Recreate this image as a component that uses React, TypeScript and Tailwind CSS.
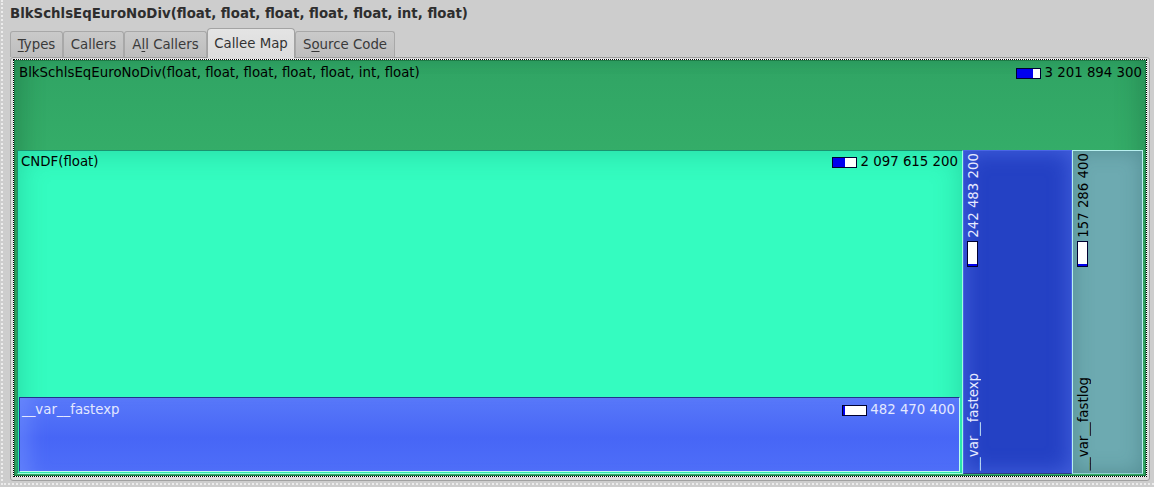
import React from "react";

const FONT = { fontFamily: '"DejaVu Sans", "Liberation Sans", sans-serif' };

function Bar({ pct, vertical = false }: { pct: number; vertical?: boolean }) {
  if (vertical) {
    return (
      <div className="w-[11px] h-[26px] border border-[#000030] bg-white flex flex-col justify-end shrink-0">
        <div className="bg-[#0000ee] w-full" style={{ height: `${pct}%` }} />
      </div>
    );
  }
  return (
    <div className="w-[25px] h-[11px] border border-[#000030] bg-white flex shrink-0">
      <div className="bg-[#0000ee] h-full" style={{ width: `${pct}%` }} />
    </div>
  );
}

function Tab({
  label,
  width,
  active = false,
}: {
  label: React.ReactNode;
  width: string;
  active?: boolean;
}) {
  if (active) {
    return (
      <div
        className={`${width} h-[30px] -mb-px relative z-10 flex items-center justify-center rounded-t-[4px] border border-b-0 border-[#a3a3a3] bg-[linear-gradient(180deg,#e4e4e4,#dcdcdc)] text-[#333] text-[13.33px]`}
      >
        {label}
      </div>
    );
  }
  return (
    <div
      className={`${width} h-[26px] flex items-center justify-center rounded-t-[3px] border border-b-0 border-[#a8a8a8] bg-[linear-gradient(180deg,#cacaca,#bdbdbd)] text-[#3a3a3a] text-[13.33px]`}
    >
      {label}
    </div>
  );
}

export default function App() {
  return (
    <div
      className="w-[1154px] h-[487px] bg-[#cdcdcd] overflow-hidden pl-px"
      style={FONT}
    >
      <div className="h-[485px] border-l-2 border-b-2 border-dotted border-[#ececec] flex flex-col">
        {/* Title */}
        <div className="h-[28px] pl-[7px] flex items-center text-[13.33px] font-bold text-[#2e2e2e] leading-none">
          BlkSchlsEqEuroNoDiv(float, float, float, float, float, int, float)
        </div>

        {/* Tabs */}
        <div className="h-[29px] pl-[7px] flex items-end">
          <Tab
            width="w-[53px]"
            label={
              <span>
                <span className="underline underline-offset-2">T</span>ypes
              </span>
            }
          />
          <Tab width="w-[61px]" label="Callers" />
          <Tab
            width="w-[83px]"
            label={
              <span>
                A<span className="underline underline-offset-2">l</span>l Callers
              </span>
            }
          />
          <Tab width="w-[88px]" label="Callee Map" active />
          <Tab
            width="w-[100px]"
            label={
              <span>
                S<span className="underline underline-offset-2">o</span>urce Code
              </span>
            }
          />
        </div>

        {/* Panel */}
        <div className="ml-[7px] w-[1140px] h-[424px] border border-[#a0a0a0] rounded-[3px] bg-[#dedede] pt-px pb-[3px] px-[2px] flex flex-col">
          <div className="flex-1 border border-dotted border-black bg-white flex flex-col">
            {/* Root node (green) */}
            <div className="flex-1 border border-[#1d7a45] bg-[linear-gradient(180deg,#30a464_0%,#36b06a_30%,#3ab86f_100%)] shadow-[inset_18px_0_22px_-10px_rgba(20,90,50,0.32),inset_-18px_0_22px_-10px_rgba(20,90,50,0.28)] flex flex-col text-[13.33px] leading-[16px]">
              <div className="h-[89px] shrink-0 flex items-start justify-between pl-[4px] pr-[3px] pt-[4px]">
                <span className="text-black">
                  BlkSchlsEqEuroNoDiv(float, float, float, float, float, int, float)
                </span>
                <div className="flex items-center gap-[3px] text-black">
                  <Bar pct={68} />
                  <span>3 201 894 300</span>
                </div>
              </div>

              {/* Children */}
              <div className="flex-1 flex pl-[2px] pr-[2px] pb-px min-h-0">
                {/* CNDF */}
                <div className="w-[946px] shrink-0 border border-[#1a9470] border-b-[#9affe0] border-r-[#9affe0] bg-[#34fcc0] shadow-[inset_0_0_28px_rgba(0,110,80,0.28)] flex flex-col pl-px pr-[2px] pb-px">
                  <div className="flex-1 flex items-start justify-between pl-[2px] pr-[2px] pt-[3px]">
                    <span className="text-black">CNDF(float)</span>
                    <div className="flex items-center gap-[3px] text-black">
                      <Bar pct={52} />
                      <span>2 097 615 200</span>
                    </div>
                  </div>
                  {/* __var__fastexp row */}
                  <div className="h-[75px] shrink-0 border border-[#22338c] border-b-[#b8ffee] border-r-[#b8ffee] bg-[linear-gradient(180deg,#5878f9_0%,#4766f6_55%,#4e6ef8_100%)] shadow-[inset_22px_0_18px_-12px_rgba(120,150,255,0.45)] flex items-start justify-between pl-[2px] pr-[4px] pt-[4px] text-[#e3e8ff]">
                    <span>__var__fastexp</span>
                    <div className="flex items-center gap-[3px]">
                      <Bar pct={8} />
                      <span>482 470 400</span>
                    </div>
                  </div>
                </div>

                {/* Blue column */}
                <div className="w-[109px] shrink-0 border border-[#4a66e6] border-b-[#2c3a8a] bg-[#2441c4] shadow-[inset_0_0_22px_rgba(110,140,255,0.45)] flex flex-col justify-between pl-[2px] pt-[2px] pb-[2px] text-[#e6eaff]">
                  <div className="flex flex-col items-start gap-[3px]">
                    <span className="[writing-mode:vertical-rl] rotate-180">242 483 200</span>
                    <div className="pl-px">
                      <Bar pct={8} vertical />
                    </div>
                  </div>
                  <span className="[writing-mode:vertical-rl] rotate-180">__var__fastexp</span>
                </div>

                {/* Teal column */}
                <div className="flex-1 border border-[#b8f0f0] border-b-[#8fcfd0] bg-[#6daab1] shadow-[inset_0_0_20px_rgba(40,90,95,0.35)] flex flex-col justify-between pl-[3px] pt-[2px] pb-[2px] text-black">
                  <div className="flex flex-col items-start gap-[3px]">
                    <span className="[writing-mode:vertical-rl] rotate-180">157 286 400</span>
                    <div className="pl-px">
                      <Bar pct={6} vertical />
                    </div>
                  </div>
                  <span className="[writing-mode:vertical-rl] rotate-180">__var__fastlog</span>
                </div>
              </div>
            </div>
          </div>
        </div>
      </div>
    </div>
  );
}
